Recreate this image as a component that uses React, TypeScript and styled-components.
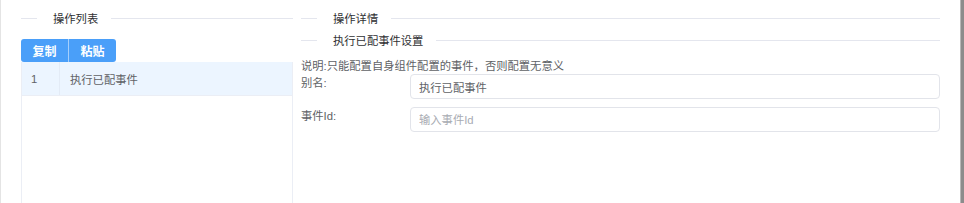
import React from "react";
import styled, { createGlobalStyle } from "styled-components";

const GlobalStyle = createGlobalStyle`
  html, body {
    margin: 0;
    padding: 0;
    background: #ffffff;
  }
  body {
    font-family: "Liberation Sans", "Noto Sans CJK SC", sans-serif;
    font-size: 11.3px;
    color: #606266;
  }
`;

// Page frame
const Page = styled.div`
  display: flex;
  height: 203px;
  box-sizing: border-box;
  border-left: 1px solid #e4e4e4;
  padding-left: 20px;
  overflow: hidden;
`;

const ScrollStrip = styled.div`
  width: 4px;
  flex: none;
  background: #8c8c8c;
  border-left: 1px solid #b8b8b8;
  box-sizing: border-box;
`;

const LeftPanel = styled.div`
  width: 272px;
  flex: none;
  display: flex;
  flex-direction: column;
`;

const RightPanel = styled.div`
  width: 639px;
  flex: none;
  margin-left: 8px;
  margin-right: 20px;
  padding-top: 7px;
  display: flex;
  flex-direction: column;
`;

// Divider with left-positioned title
const Divider = styled.div<{ $h: number }>`
  display: flex;
  align-items: center;
  height: ${(p) => p.$h}px;
  flex: none;

  &::before {
    content: "";
    width: 16px;
    height: 1px;
    background: #e4e6ee;
  }
  &::after {
    content: "";
    flex: 1;
    height: 1px;
    background: #e4e6ee;
  }
`;

const DividerText = styled.span`
  margin: 0 13px 0 16px;
  color: #303133;
  font-size: 11.3px;
  white-space: nowrap;
`;

// Button group
const BtnGroup = styled.div`
  display: flex;
  margin-top: 3px;
`;

const Btn = styled.button<{ $first?: boolean }>`
  height: 23px;
  width: ${(p) => (p.$first ? 47 : 48)}px;
  padding: 0;
  border: none;
  border-left: ${(p) => (p.$first ? "none" : "1px solid rgba(255,255,255,0.5)")};
  border-radius: ${(p) => (p.$first ? "3px 0 0 3px" : "0 3px 3px 0")};
  background: #4a9ff9;
  color: #ffffff;
  font-family: "Liberation Sans", "Noto Sans CJK SC", sans-serif;
  font-size: 12px;
  font-weight: 700;
  cursor: pointer;
`;

// Table
const Table = styled.div`
  flex: 1;
  border-left: 1px solid #ebeef5;
  border-right: 1px solid #ebeef5;
`;

const Row = styled.div<{ $active?: boolean }>`
  display: flex;
  height: 33px;
  align-items: stretch;
  background: ${(p) => (p.$active ? "#ecf5ff" : "#fff")};
  border-bottom: 1px solid #ebeef5;
`;

const IndexCell = styled.div`
  width: 38px;
  padding-left: 9px;
  box-sizing: border-box;
  display: flex;
  align-items: center;
  border-right: 1px solid #e3ebf6;
`;

const NameCell = styled.div`
  flex: 1;
  padding-left: 10px;
  display: flex;
  align-items: center;
`;

// Form
const Note = styled.div`
  margin-top: 8px;
  line-height: 15px;
  white-space: nowrap;
`;

const FormItem = styled.div`
  display: flex;
  margin-bottom: 8px;
`;

const Label = styled.label`
  width: 109px;
  flex: none;
  line-height: 16px;
  padding-top: 1px;
`;

const Input = styled.input`
  flex: 1;
  height: 25px;
  box-sizing: border-box;
  border: 1px solid #e2e4ea;
  border-radius: 4px;
  padding: 0 8px;
  font-family: "Liberation Sans", "Noto Sans CJK SC", sans-serif;
  font-size: 11.3px;
  color: #606266;
  outline: none;

  &::placeholder {
    color: #a8abb2;
  }
`;

export default function App() {
  return (
    <>
      <GlobalStyle />
      <Page>
        <LeftPanel>
          <Divider $h={36}>
            <DividerText>操作列表</DividerText>
          </Divider>
          <BtnGroup>
            <Btn $first>复制</Btn>
            <Btn>粘贴</Btn>
          </BtnGroup>
          <Table>
            <Row $active>
              <IndexCell>1</IndexCell>
              <NameCell>执行已配事件</NameCell>
            </Row>
          </Table>
        </LeftPanel>
        <RightPanel>
          <Divider $h={22}>
            <DividerText>操作详情</DividerText>
          </Divider>
          <Divider $h={22}>
            <DividerText>执行已配事件设置</DividerText>
          </Divider>
          <Note>说明:只能配置自身组件配置的事件，否则配置无意义</Note>
          <FormItem>
            <Label>别名:</Label>
            <Input defaultValue="执行已配事件" />
          </FormItem>
          <FormItem>
            <Label>事件Id:</Label>
            <Input placeholder="输入事件Id" />
          </FormItem>
        </RightPanel>
        <ScrollStrip />
      </Page>
    </>
  );
}
